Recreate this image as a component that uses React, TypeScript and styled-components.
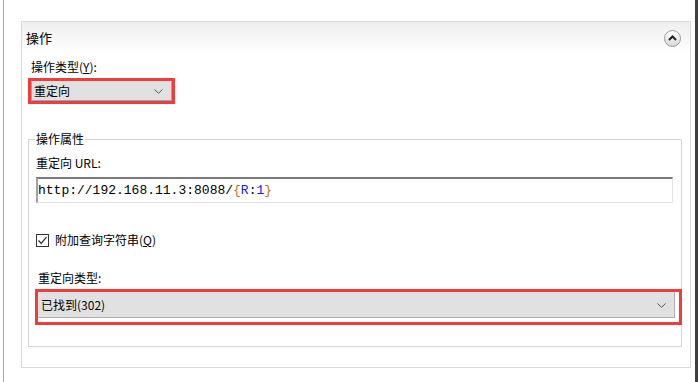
import React from "react";
import styled, { createGlobalStyle } from "styled-components";

const Global = createGlobalStyle`
  html, body { margin: 0; padding: 0; background: #ffffff; }
  body { font-family: "Noto Sans CJK SC", "Noto Sans", sans-serif; font-size: 12px; color: #000; }
`;

const Page = styled.div`
  width: 698px;
  height: 382px;
  display: flex;
  box-sizing: border-box;
  overflow: hidden;
`;

const LeftRail = styled.div`
  width: 17px;
  margin-left: 3px;
  border-left: 1px solid #a8a8a8;
  flex: none;
`;

const DarkBar = styled.div`
  width: 4px;
  margin-left: 4px;
  background: #3f3f3f;
  flex: none;
`;

const Panel = styled.section`
  width: 670px;
  height: 347px;
  margin-top: 21px;
  border: 1px solid #d9d9d9;
  box-sizing: border-box;
  flex: none;
  display: flex;
  flex-direction: column;
`;

const Header = styled.div`
  height: 32px;
  padding: 0 8px 0 4px;
  display: flex;
  align-items: center;
  justify-content: space-between;
  background: linear-gradient(#eeeeee, #ffffff);
`;

const Title = styled.div`
  font-size: 13px;
  line-height: 16px;
`;

const CollapseButton = styled.div`
  width: 15px;
  height: 15px;
  border-radius: 50%;
  border: 1px solid #9a9a9a;
  background: linear-gradient(#ffffff, #d8d8d8);
  display: flex;
  align-items: center;
  justify-content: center;
  margin-right: 1px;
`;

const Body = styled.div`
  padding: 0 8px 0 6px;
  display: flex;
  flex-direction: column;
`;

const Label = styled.div<{ $top: number; $left?: number }>`
  margin-top: ${(p) => p.$top}px;
  margin-left: ${(p) => p.$left ?? 0}px;
  line-height: 14px;
  height: 14px;
  white-space: nowrap;
`;

const RedFrame = styled.div<{ $top: number; $width: number; $left?: number; $pad?: string }>`
  margin-top: ${(p) => p.$top}px;
  margin-left: ${(p) => p.$left ?? 0}px;
  width: ${(p) => p.$width}px;
  border: 3px solid #f23b3b;
  box-sizing: border-box;
  padding: ${(p) => p.$pad ?? "0"};
  background: #ffffff;
  position: relative;
`;

const Select = styled.div<{ $height: number; $focus?: boolean }>`
  height: ${(p) => p.$height}px;
  box-sizing: border-box;
  background: #e1e1e1;
  border: 1px solid ${(p) => (p.$focus ? "#8ea6c4" : "#adadad")};
  border-top-color: #e1e1e1;
  border-left-color: ${(p) => (p.$focus ? "#8ea6c4" : "#e1e1e1")};
  display: flex;
  align-items: center;
  justify-content: space-between;
  padding: 0 8px 0 2px;
  line-height: 14px;
`;

const Group = styled.fieldset`
  margin: 28px 0 0 0;
  width: 654px;
  height: 215px;
  box-sizing: border-box;
  border: 1px solid #d7d7d7;
  padding: 0 7px 0 6px;
  display: flex;
  flex-direction: column;
  min-width: 0;
`;

const Legend = styled.legend`
  padding: 0 1px;
  line-height: 14px;
  font-size: 12px;
`;

const Field = styled.div`
  margin-left: 1px;
  display: flex;
  flex-direction: column;
`;

const TextBox = styled.div`
  margin-top: 7px;
  height: 26px;
  width: 637px;
  box-sizing: border-box;
  border-top: 2px solid #7a7a7a;
  border-left: 2px solid #a0a0a0;
  border-right: 1px solid #e3e3e3;
  border-bottom: 1px solid #e3e3e3;
  padding-left: 0px;
  display: flex;
  align-items: center;
  font-family: "Liberation Mono", "DejaVu Sans Mono", monospace;
  font-size: 13px;
  white-space: pre;
`;

const Tok = styled.span<{ $c: string }>`
  color: ${(p) => p.$c};
`;

const CheckRow = styled.label`
  margin-top: 30px;
  height: 14px;
  display: flex;
  align-items: center;
  gap: 6px;
  line-height: 14px;
`;

const Box = styled.span`
  width: 13px;
  height: 13px;
  box-sizing: border-box;
  border: 1px solid #333333;
  background: #ffffff;
  display: flex;
  align-items: center;
  justify-content: center;
`;

const U = styled.span`
  text-decoration: underline;
`;

const Chevron = () => (
  <svg width="9" height="5" viewBox="0 0 9 5">
    <polyline points="0.5,0.5 4.5,4.3 8.5,0.5" fill="none" stroke="#555555" strokeWidth="1" />
  </svg>
);

export default function App() {
  return (
    <>
      <Global />
      <Page>
        <LeftRail />
        <Panel>
          <Header>
            <Title>操作</Title>
            <CollapseButton>
              <svg width="9" height="6" viewBox="0 0 9 6">
                <polyline points="1,5 4.5,1.5 8,5" fill="none" stroke="#222" strokeWidth="2" />
              </svg>
            </CollapseButton>
          </Header>
          <Body>
            <Label $top={6} $left={3}>
              操作类型(<U>Y</U>):
            </Label>
            <RedFrame $top={4} $width={147}>
              <Select $height={20} $focus>
                <span>重定向</span>
                <Chevron />
              </Select>
            </RedFrame>
            <Group>
              <Legend>操作属性</Legend>
              <Field>
                <Label $top={10}>重定向 URL:</Label>
                <TextBox>
                  <span>http://192.168.11.3:8088/</span>
                  <Tok $c="#c0701a">{"{"}</Tok>
                  <Tok $c="#2020e0">R</Tok>
                  <Tok $c="#000">:</Tok>
                  <Tok $c="#2020e0">1</Tok>
                  <Tok $c="#c0701a">{"}"}</Tok>
                </TextBox>
                <CheckRow>
                  <Box>
                    <svg width="11" height="11" viewBox="0 0 11 11">
                      <polyline points="1.5,5.5 4.2,8.3 9.5,2.2" fill="none" stroke="#222" strokeWidth="1.2" />
                    </svg>
                  </Box>
                  <span>
                    附加查询字符串(<U>Q</U>)
                  </span>
                </CheckRow>
                <Label $top={24} $left={2}>重定向类型:</Label>
                <RedFrame $top={4} $width={647} $left={-1} $pad="0 4px 4px 0">
                  <Select $height={26}>
                    <span>已找到(302)</span>
                    <Chevron />
                  </Select>
                </RedFrame>
              </Field>
            </Group>
          </Body>
        </Panel>
        <DarkBar />
      </Page>
    </>
  );
}
